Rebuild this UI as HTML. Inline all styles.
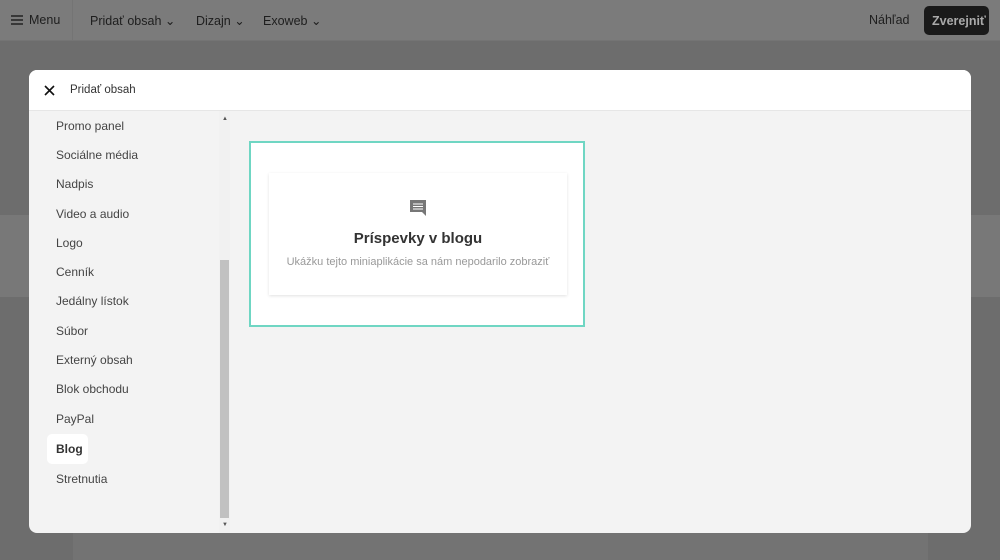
<!DOCTYPE html>
<html><head><meta charset="utf-8"><style>
*{margin:0;padding:0;box-sizing:border-box}
body{width:1000px;height:560px;overflow:hidden;background:#6d6d6d;font-family:"Liberation Sans",sans-serif;position:relative}
.top{position:absolute;left:0;top:0;width:1000px;height:41px;background:#7b7b7b;border-bottom:1px solid #747474;color:#1e1e1e;font-size:12.5px}
.top span{position:absolute;top:13px}
.band{position:absolute;left:0;top:215px;width:1000px;height:82px;background:#787878}
.pg{position:absolute;left:73px;top:297px;width:855px;height:263px;background:#737373}
.modal{position:absolute;left:29px;top:70px;width:942px;height:463px;background:#f3f3f3;border-radius:8px;overflow:hidden}
.hdr{height:41px;background:#fff;border-bottom:1px solid #e6e6e6;position:relative}
.hdr .t{position:absolute;left:41px;top:14px;font-size:11.5px;color:#333}
.it{position:absolute;left:27px;font-size:12px;color:#444}
.blog{position:absolute;left:18px;top:364px;width:41px;height:30px;background:#fff;border-radius:5px;font-weight:bold;font-size:12px;color:#333;padding:8px 0 0 9px}
.track{position:absolute;left:190px;top:41px;width:11px;height:422px;background:#f1f1f1}
.thumb{position:absolute;left:191px;top:190px;width:9px;height:258px;background:#c1c1c1}
.frame{position:absolute;left:220px;top:71px;width:336px;height:186px;background:#fff;border:2px solid #6fd6c3}
.card{position:absolute;left:18px;top:30px;width:298px;height:122px;background:#fff;box-shadow:0 1px 3px rgba(0,0,0,.12);text-align:center}
</style></head><body>
<div class="top">
<svg style="position:absolute;left:11px;top:15px" width="12" height="10"><path d="M0 1h12M0 5h12M0 9h12" stroke="#222" stroke-width="1.5"/></svg>
<span style="left:29px">Menu</span>
<div style="position:absolute;left:72px;top:0;width:1px;height:41px;background:#747474"></div>
<span style="left:90px">Pridať obsah ⌄</span>
<span style="left:196px">Dizajn ⌄</span>
<span style="left:263px">Exoweb ⌄</span>
<span style="left:869px">Náhľad</span>
<div style="position:absolute;left:924px;top:6px;width:65px;height:29px;background:#1a1a1a;border-radius:5px;color:#aaa;font-size:12.5px;font-weight:bold;padding:8px 0 0 8px">Zverejniť</div>
</div>
<div class="band"></div><div class="pg"></div>
<div class="modal">
<div class="hdr"><svg style="position:absolute;left:15px;top:15px" width="11" height="11"><path d="M1 1L10 10M10 1L1 10" stroke="#111" stroke-width="1.6"/></svg><span class="t">Pridať obsah</span></div>
<div class="it" style="top:49px">Promo panel</div>
<div class="it" style="top:78px">Sociálne média</div>
<div class="it" style="top:107px">Nadpis</div>
<div class="it" style="top:137px">Video a audio</div>
<div class="it" style="top:166px">Logo</div>
<div class="it" style="top:195px">Cenník</div>
<div class="it" style="top:224px">Jedálny lístok</div>
<div class="it" style="top:254px">Súbor</div>
<div class="it" style="top:283px">Externý obsah</div>
<div class="it" style="top:312px">Blok obchodu</div>
<div class="it" style="top:342px">PayPal</div>
<div class="blog">Blog</div>
<div class="it" style="top:402px">Stretnutia</div>
<div class="track"></div><div class="thumb"></div>
<div style="position:absolute;left:193px;top:46px;font-size:6px;color:#555">▲</div>
<div style="position:absolute;left:193px;top:452px;font-size:6px;color:#555">▼</div>
<div class="frame"><div class="card">
<svg style="margin-top:25px" width="20" height="20" viewBox="0 0 20 20"><path d="M2 2h16v12H2z M14 14h4v4z" fill="#777"/><path d="M5 6h10M5 8.5h10M5 11h10" stroke="#fff" stroke-width="1"/></svg>
<div style="font-weight:bold;font-size:15px;color:#333;margin-top:7px">Príspevky v blogu</div>
<div style="font-size:11px;color:#999;margin-top:9px">Ukážku tejto miniaplikácie sa nám nepodarilo zobraziť</div>
</div></div>
</div>
</body></html>
